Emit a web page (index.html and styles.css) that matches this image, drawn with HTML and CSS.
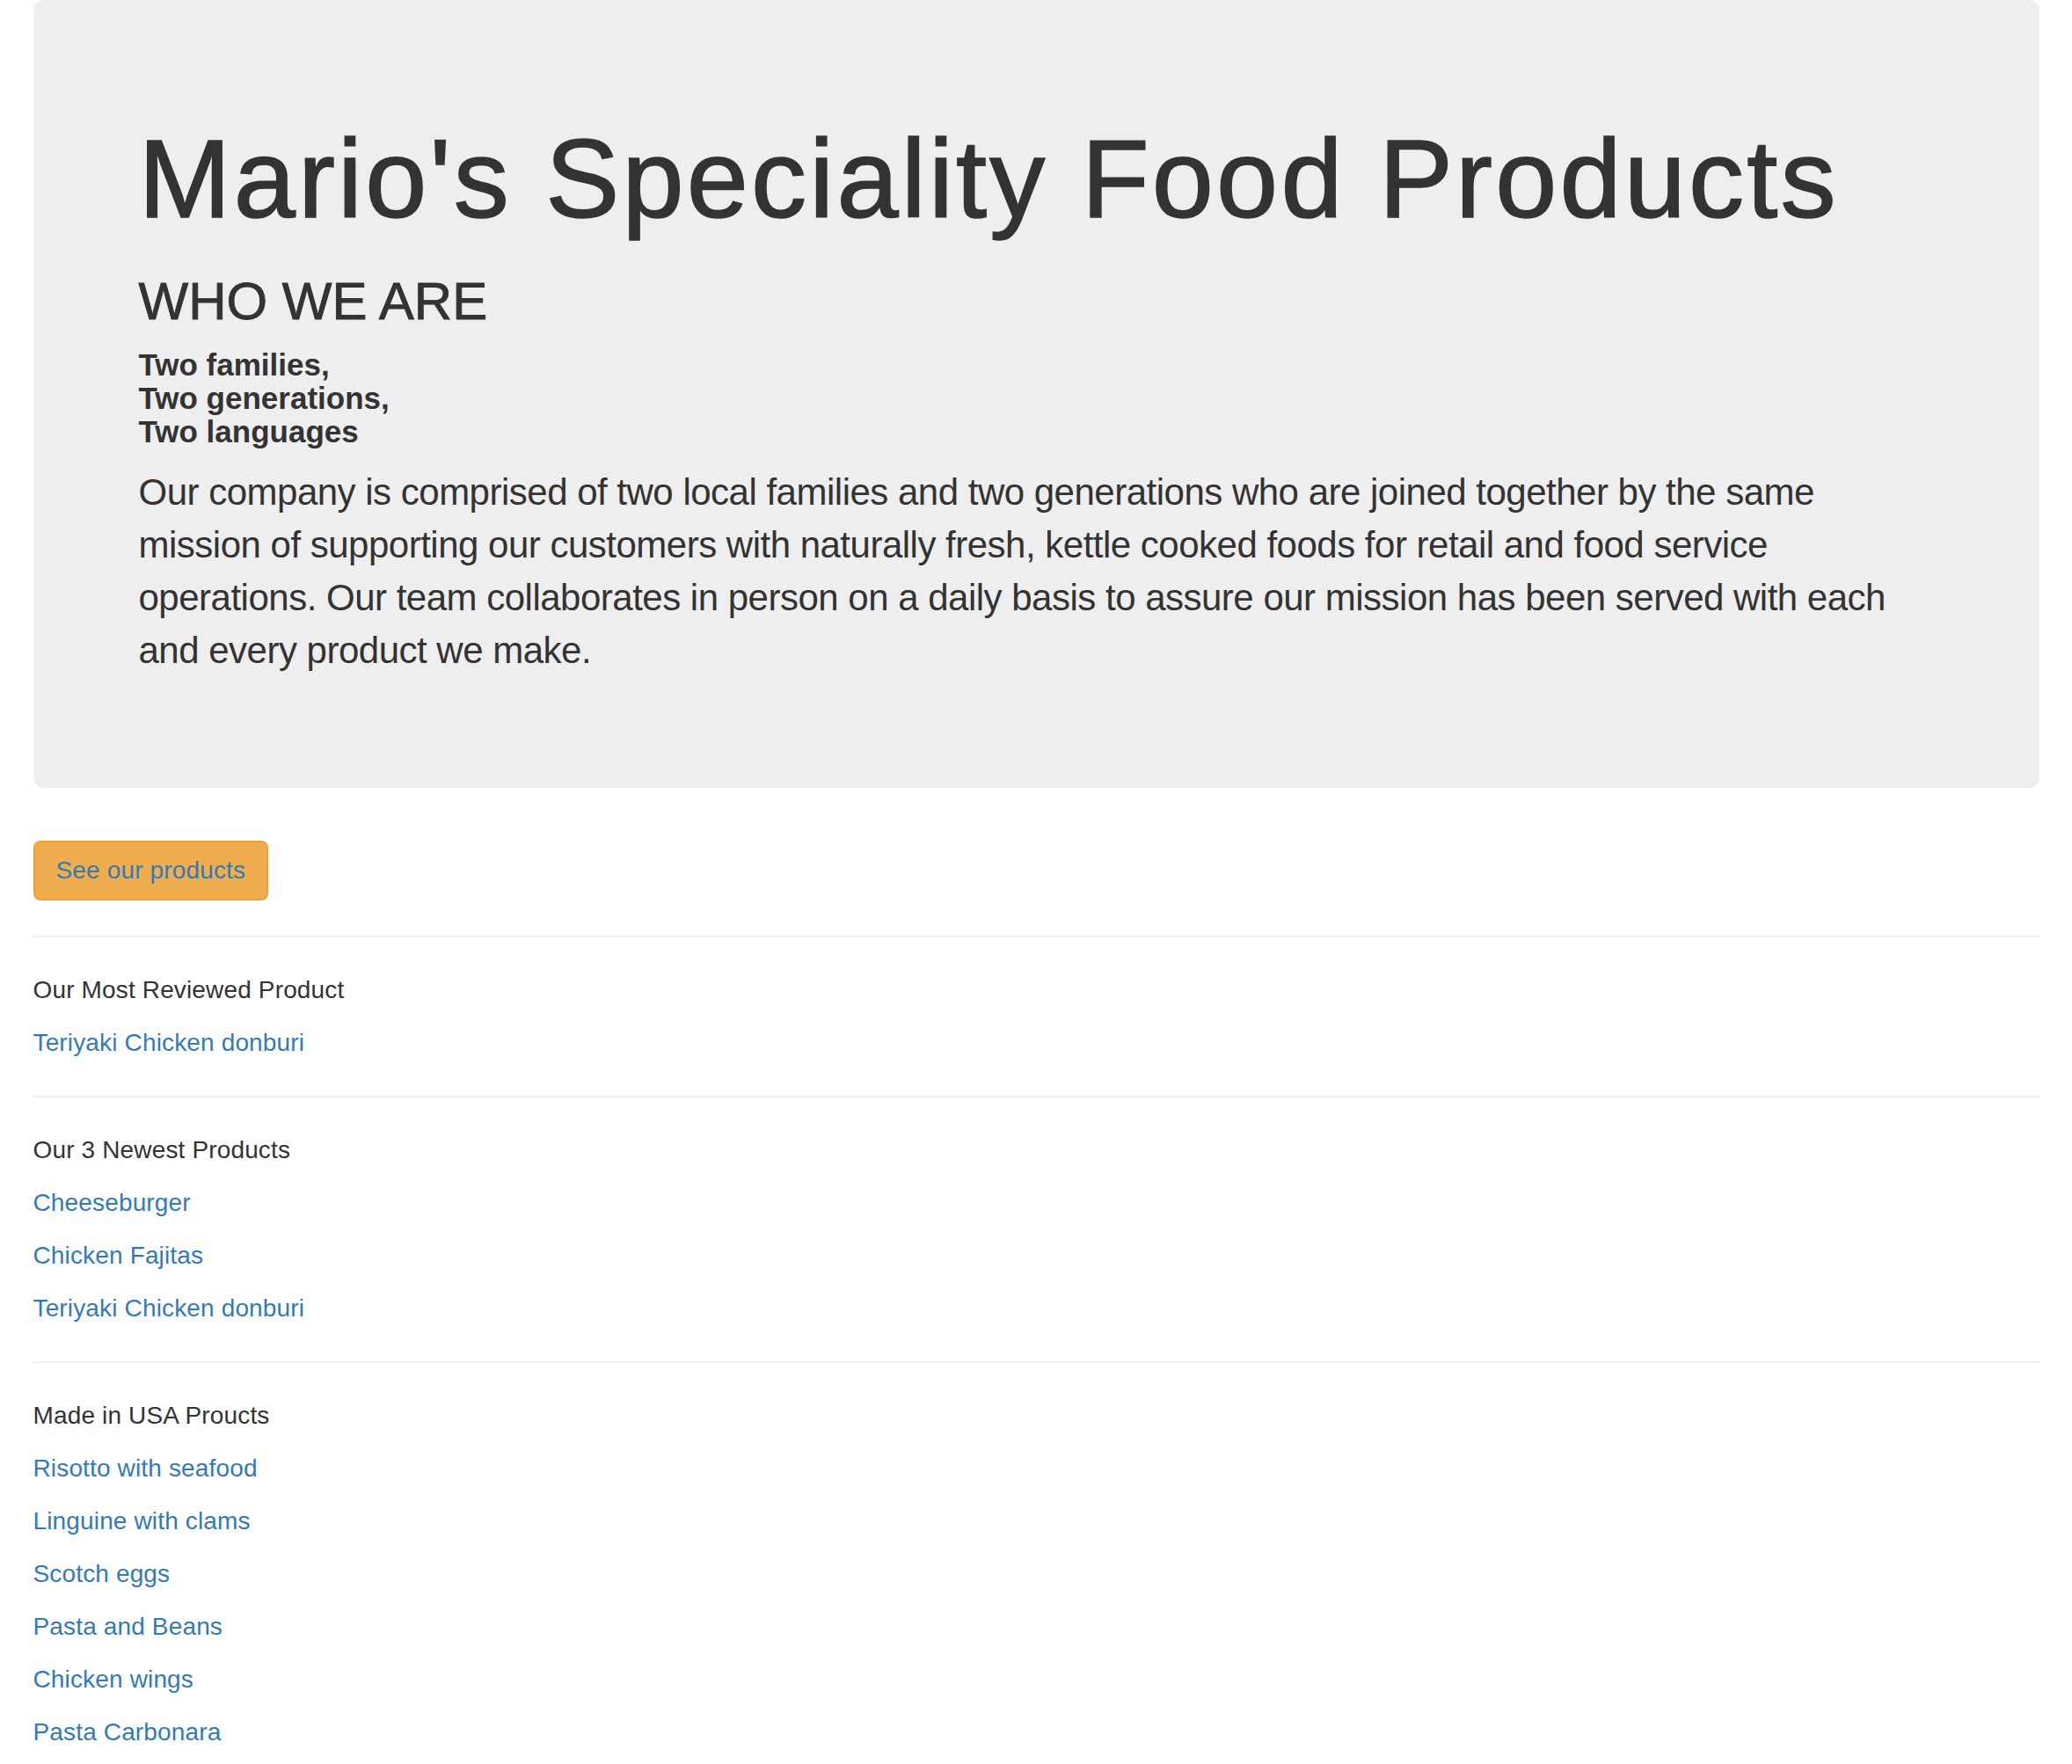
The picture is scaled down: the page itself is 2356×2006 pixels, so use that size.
FILE: index.html
```html
<!DOCTYPE html>
<html lang="en">
<head>
<meta charset="utf-8">
<title>Mario's Speciality Food Products</title>
<link rel="stylesheet" href="styles.css">
</head>
<body>
<div class="page">
  <div class="jumbotron">
    <h1 class="title">Mario's Speciality Food Products</h1>
    <h2 class="subtitle">WHO WE ARE</h2>
    <h4 class="tagline">Two families,<br>Two generations,<br>Two languages</h4>
    <p class="lead">Our company is comprised of two local families and two generations who are joined together by the same mission of supporting our customers with naturally fresh, kettle cooked foods for retail and food service operations. Our team collaborates in person on a daily basis to assure our mission has been served with each and every product we make.</p>
  </div>

  <button class="btn-products" type="button"><a href="#">See our products</a></button>

  <hr class="rule">
  <div class="group">
    <p class="group-label">Our Most Reviewed Product</p>
    <p class="item"><a href="#">Teriyaki Chicken donburi</a></p>
  </div>

  <hr class="rule">
  <div class="group">
    <p class="group-label">Our 3 Newest Products</p>
    <p class="item"><a href="#">Cheeseburger</a></p>
    <p class="item"><a href="#">Chicken Fajitas</a></p>
    <p class="item"><a href="#">Teriyaki Chicken donburi</a></p>
  </div>

  <hr class="rule">
  <div class="group">
    <p class="group-label">Made in USA Proucts</p>
    <p class="item"><a href="#">Risotto with seafood</a></p>
    <p class="item"><a href="#">Linguine with clams</a></p>
    <p class="item"><a href="#">Scotch eggs</a></p>
    <p class="item"><a href="#">Pasta and Beans</a></p>
    <p class="item"><a href="#">Chicken wings</a></p>
    <p class="item"><a href="#">Pasta Carbonara</a></p>
  </div>
</div>
</body>
</html>
```

FILE: styles.css
```css
* { box-sizing: border-box; }

html, body {
  margin: 0;
  padding: 0;
  background: #fff;
}

body {
  font-family: "Liberation Sans", Arial, Helvetica, sans-serif;
  font-size: 28px;
  line-height: 40px;
  color: #333;
  letter-spacing: 0.15px;
}

.page {
  padding: 0 37.5px 40px;
}

.jumbotron {
  background: #eee;
  border-radius: 12px;
  padding: 96px 120px;
  margin-bottom: 60px;
  display: flow-root;
}

.title {
  font-size: 126px;
  line-height: 138.6px;
  font-weight: 500;
  margin: 39px 0 20px;
  color: #333;
  letter-spacing: 3.2px;
  -webkit-text-stroke: 1.6px #333;
}

.subtitle {
  font-size: 60px;
  line-height: 66px;
  font-weight: 500;
  margin: 36px 0 20px;
  color: #333;
  letter-spacing: 0;
  -webkit-text-stroke: 0.9px #333;
}

.tagline {
  font-size: 35px;
  line-height: 38px;
  font-weight: 700;
  margin: 20px 0 20px;
  color: #333;
  letter-spacing: 0;
}

.lead {
  font-size: 42px;
  line-height: 60px;
  font-weight: 300;
  margin: 0 0 30px;
  color: #333;
  letter-spacing: -0.5px;
}

.btn-products {
  display: inline-block;
  font-family: inherit;
  font-size: 28px;
  line-height: 40px;
  padding: 12px 24px;
  border: 2px solid #eea236;
  border-radius: 8px;
  background: #f0ad4e;
  cursor: pointer;
  margin: 0;
  vertical-align: top;
  letter-spacing: 0.15px;
}

a {
  color: #337ab7;
  text-decoration: none;
}

.rule {
  border: 0;
  border-top: 2px solid #eee;
  margin: 40px 0;
  height: 0;
}

.group-label {
  margin: 0 0 20px;
  color: #333;
}

.item {
  margin: 0 0 20px;
}
```
